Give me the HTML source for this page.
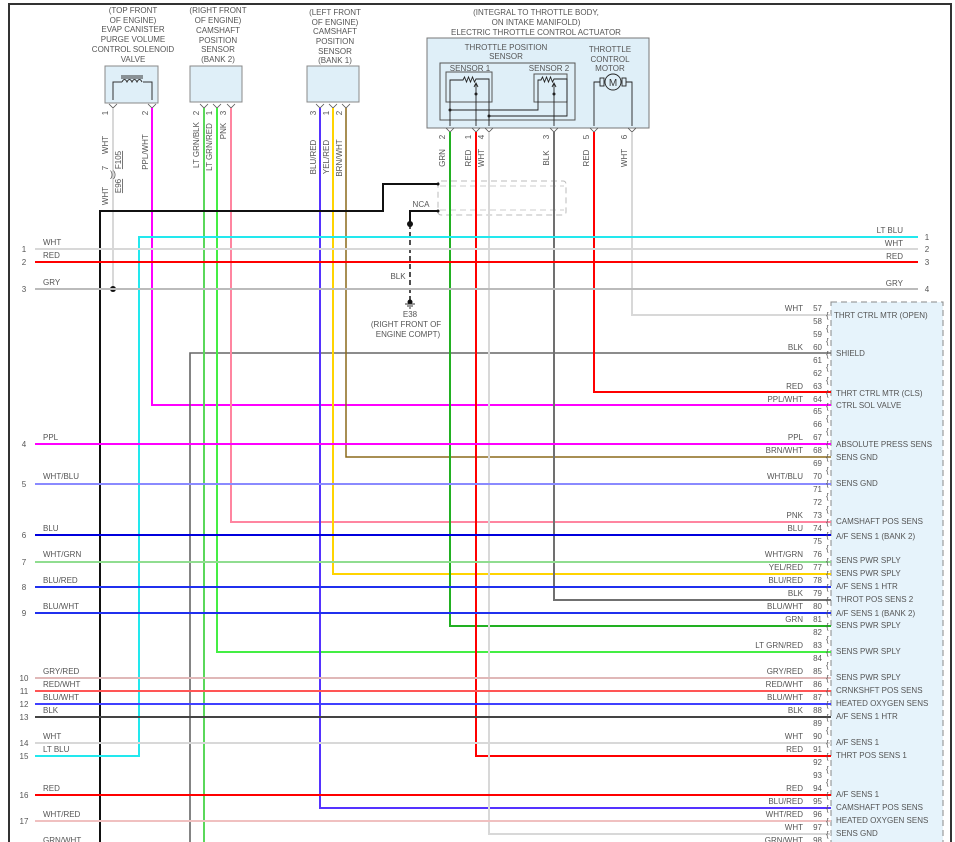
<!DOCTYPE html>
<html><head><meta charset="utf-8"><style>
html,body{margin:0;padding:0;background:#fff}
svg{display:block}
text{font-family:"Liberation Sans",sans-serif;font-size:8px;fill:#555}
.c{text-anchor:middle}.r{text-anchor:end}
</style></head><body>
<svg width="955" height="842" viewBox="0 0 955 842" xmlns="http://www.w3.org/2000/svg">
<rect x="9" y="4" width="942" height="850" fill="none" stroke="#333" stroke-width="2"/>

<!-- module box -->
<rect x="831" y="302" width="112" height="560" fill="#e6f3fb" stroke="#888" stroke-dasharray="6,4"/>

<!-- header texts -->
<g class="c">
<text x="133" y="13" class="c">(TOP FRONT</text><text x="133" y="23" class="c">OF ENGINE)</text><text x="133" y="32" class="c">EVAP CANISTER</text><text x="133" y="42" class="c">PURGE VOLUME</text><text x="133" y="52" class="c">CONTROL SOLENOID</text><text x="133" y="62" class="c">VALVE</text>
<text x="218" y="13" class="c">(RIGHT FRONT</text><text x="218" y="23" class="c">OF ENGINE)</text><text x="218" y="33" class="c">CAMSHAFT</text><text x="218" y="43" class="c">POSITION</text><text x="218" y="52" class="c">SENSOR</text><text x="218" y="62" class="c">(BANK 2)</text>
<text x="335" y="15" class="c">(LEFT FRONT</text><text x="335" y="25" class="c">OF ENGINE)</text><text x="335" y="34" class="c">CAMSHAFT</text><text x="335" y="44" class="c">POSITION</text><text x="335" y="54" class="c">SENSOR</text><text x="335" y="63" class="c">(BANK 1)</text>
<text x="536" y="15" class="c">(INTEGRAL TO THROTTLE BODY,</text><text x="536" y="25" class="c">ON INTAKE MANIFOLD)</text><text x="536" y="35" class="c">ELECTRIC THROTTLE CONTROL ACTUATOR</text>
</g>

<!-- connectors -->
<rect x="105" y="66" width="53" height="37" fill="#dfeff8" stroke="#888"/>
<path d="M113,100 V82 H122 M152,100 V82 H143" fill="none" stroke="#333"/>
<path d="M122,82 q2.5,-5 5,0 q2.5,-5 5,0 q2.5,-5 5,0 q2.5,-5 5,0" fill="none" stroke="#333"/>
<path d="M121,76 H143 M121,78 H143" stroke="#333"/>
<rect x="190" y="66" width="52" height="36" fill="#dfeff8" stroke="#888"/>
<rect x="307" y="66" width="52" height="36" fill="#dfeff8" stroke="#888"/>

<rect x="427" y="38" width="222" height="90" fill="#dfeff8" stroke="#777"/>
<rect x="440" y="63" width="135" height="57" fill="none" stroke="#555"/>
<rect x="446" y="72" width="46" height="30" fill="none" stroke="#555"/>
<rect x="534" y="74" width="33" height="28" fill="none" stroke="#555"/>
<text x="506" y="50" class="c">THROTTLE POSITION</text><text x="506" y="59" class="c">SENSOR</text>
<text x="470" y="71" class="c">SENSOR 1</text><text x="549" y="71" class="c">SENSOR 2</text>
<text x="610" y="52" class="c">THROTTLE</text><text x="610" y="62" class="c">CONTROL</text><text x="610" y="71" class="c">MOTOR</text>
<g fill="none" stroke="#222" stroke-width="0.9">
<path d="M450,126 V80 H463 l1.5,-3 2,5 2,-5 2,5 2,-5 2,5 1.5,-3 H489 V126"/>
<path d="M476,126 V84 M474,87 l2,-4 2,4"/>
<path d="M450,110 H538 V80 H541 l1.5,-3 2,5 2,-5 2,5 2,-5 2,5 1.5,-3 H567 V116 H489"/>
<path d="M554,126 V84 M552,87 l2,-4 2,4"/>
<path d="M594,126 V82 H600 M626,82 H632 V126"/>
<rect x="600" y="78" width="4" height="8"/><rect x="622" y="78" width="4" height="8"/>
<circle cx="613" cy="82" r="8"/>
</g>
<text x="613" y="86" class="c" style="font-size:10px;fill:#333">M</text>
<g fill="#222"><circle cx="476" cy="94" r="1.5"/><circle cx="554" cy="94" r="1.5"/><circle cx="450" cy="110" r="1.5"/><circle cx="489" cy="116" r="1.5"/></g>

<!-- pin chevrons -->
<g fill="none" stroke="#555" stroke-width="0.8">
<path d="M109,104 l4,4 4,-4 M148,104 l4,4 4,-4 M200,104 l4,4 4,-4 M213,104 l4,4 4,-4 M227,104 l4,4 4,-4 M316,104 l4,4 4,-4 M329,104 l4,4 4,-4 M342,104 l4,4 4,-4"/>
<path d="M446,128 l4,4 4,-4 M472,128 l4,4 4,-4 M485,128 l4,4 4,-4 M550,128 l4,4 4,-4 M590,128 l4,4 4,-4 M628,128 l4,4 4,-4"/>
</g>

<!-- dashed NCA box -->
<rect x="438" y="181" width="128" height="34" rx="3" fill="none" stroke="#bbb" stroke-dasharray="6,4"/>
<path d="M440,186 H564 M440,210 H564" stroke="#ccc" stroke-dasharray="6,4"/>

<!-- verticals -->
<g fill="none" stroke-width="2">
<path d="M113,108 V289" stroke="#d8d8d8"/>
<path d="M152,108 V405 H831" stroke="#ff00ff"/>
<path d="M190,842 V353 H831" stroke="#666" stroke-width="1.6"/>
<path d="M204,108 V842" stroke="#5ad85a"/>
<path d="M217,108 V652 H831" stroke="#44ee44"/>
<path d="M231,108 V522 H831" stroke="#ff85a0"/>
<path d="M320,108 V808 H831" stroke="#5533ff"/>
<path d="M333,108 V574 H831" stroke="#ffd400"/>
<path d="M346,108 V457 H831" stroke="#8b6a1a" stroke-width="1.5"/>
<path d="M450,132 V626 H831" stroke="#22b022"/>
<path d="M476,132 V756 H831" stroke="#ff0000"/>
<path d="M489,132 V834 H831" stroke="#d8d8d8"/>
<path d="M554,132 V600 H831" stroke="#707070"/>
<path d="M594,132 V392 H831" stroke="#ff0000"/>
<path d="M632,132 V315 H831" stroke="#d8d8d8"/>
<path d="M100,842 V211 H383 V184 H438" stroke="#111"/>
<path d="M410,224 V211 H438" stroke="#111"/>
<path d="M410,224 V300" stroke="#222" stroke-dasharray="5,3" stroke-width="1.6"/>
<path d="M35,756 H139 V237 H918" stroke="#22e8ee"/>
</g>
<g fill="#111"><circle cx="113" cy="289" r="3"/><circle cx="410" cy="224" r="3"/><circle cx="438" cy="184" r="1.5"/><circle cx="438" cy="211" r="1.5"/><circle cx="410" cy="302" r="2.5"/></g>
<path d="M405,304 H415 M407,306 H413 M409,308 H411" stroke="#333"/>
<text x="421" y="207" class="c">NCA</text>
<text x="398" y="279" class="c">BLK</text>
<text x="410" y="317" class="c">E38</text>
<text x="406" y="327" class="c">(RIGHT FRONT OF</text>
<text x="408" y="337" class="c">ENGINE COMPT)</text>

<!-- horizontal wires -->
<g fill="none" stroke-width="2">
<path d="M35,249 H918" stroke="#d8d8d8"/>
<path d="M35,262 H918" stroke="#ff0000"/>
<path d="M35,289 H918" stroke="#bbbbbb"/>
<path d="M35,444 H831" stroke="#ff00ff"/>
<path d="M35,484 H831" stroke="#8a8aff"/>
<path d="M35,535 H831" stroke="#0000dd"/>
<path d="M35,562 H831" stroke="#90dd90"/>
<path d="M35,587 H831" stroke="#2030ee"/>
<path d="M35,613 H831" stroke="#2030ee"/>
<path d="M35,678 H831" stroke="#e0b8b8"/>
<path d="M35,691 H831" stroke="#ff5555"/>
<path d="M35,704 H831" stroke="#4040ff"/>
<path d="M35,717 H831" stroke="#444"/>
<path d="M35,743 H831" stroke="#d8d8d8"/>
<path d="M35,795 H831" stroke="#ff0000"/>
<path d="M35,821 H831" stroke="#f0c0c0"/>
</g>

<!-- rotated labels -->
<g>
<text transform="translate(108,113) rotate(-90)" class="c">1</text>
<text transform="translate(148,113) rotate(-90)" class="c">2</text>
<text transform="translate(108,145) rotate(-90)" class="c">WHT</text>
<text transform="translate(108,168) rotate(-90)" class="c">7</text>
<text transform="translate(108,196) rotate(-90)" class="c">WHT</text>
<text transform="translate(121,160) rotate(-90)" class="c" style="text-decoration:underline">F105</text>
<text transform="translate(121,186) rotate(-90)" class="c" style="text-decoration:underline">E96</text>
<text x="110" y="177" style="font-size:9px">)</text><text x="113" y="177" style="font-size:9px">)</text>
<text transform="translate(148,152) rotate(-90)" class="c">PPL/WHT</text>
<text transform="translate(199,113) rotate(-90)" class="c">2</text>
<text transform="translate(212,113) rotate(-90)" class="c">1</text>
<text transform="translate(226,113) rotate(-90)" class="c">3</text>
<text transform="translate(199,145) rotate(-90)" class="c">LT GRN/BLK</text>
<text transform="translate(212,147) rotate(-90)" class="c">LT GRN/RED</text>
<text transform="translate(226,131) rotate(-90)" class="c">PNK</text>
<text transform="translate(316,113) rotate(-90)" class="c">3</text>
<text transform="translate(329,113) rotate(-90)" class="c">1</text>
<text transform="translate(342,113) rotate(-90)" class="c">2</text>
<text transform="translate(316,157) rotate(-90)" class="c">BLU/RED</text>
<text transform="translate(329,157) rotate(-90)" class="c">YEL/RED</text>
<text transform="translate(342,158) rotate(-90)" class="c">BRN/WHT</text>
<text transform="translate(445,137) rotate(-90)" class="c">2</text>
<text transform="translate(471,137) rotate(-90)" class="c">1</text>
<text transform="translate(484,137) rotate(-90)" class="c">4</text>
<text transform="translate(549,137) rotate(-90)" class="c">3</text>
<text transform="translate(589,137) rotate(-90)" class="c">5</text>
<text transform="translate(627,137) rotate(-90)" class="c">6</text>
<text transform="translate(445,158) rotate(-90)" class="c">GRN</text>
<text transform="translate(471,158) rotate(-90)" class="c">RED</text>
<text transform="translate(484,158) rotate(-90)" class="c">WHT</text>
<text transform="translate(549,158) rotate(-90)" class="c">BLK</text>
<text transform="translate(589,158) rotate(-90)" class="c">RED</text>
<text transform="translate(627,158) rotate(-90)" class="c">WHT</text>
</g>

<!-- left pin labels -->
<g>
<text x="24" y="252" class="c">1</text><text x="43" y="245">WHT</text>
<text x="24" y="265" class="c">2</text><text x="43" y="258">RED</text>
<text x="24" y="292" class="c">3</text><text x="43" y="285">GRY</text>
<text x="24" y="447" class="c">4</text><text x="43" y="440">PPL</text>
<text x="24" y="487" class="c">5</text><text x="43" y="479">WHT/BLU</text>
<text x="24" y="538" class="c">6</text><text x="43" y="531">BLU</text>
<text x="24" y="565" class="c">7</text><text x="43" y="557">WHT/GRN</text>
<text x="24" y="590" class="c">8</text><text x="43" y="583">BLU/RED</text>
<text x="24" y="616" class="c">9</text><text x="43" y="609">BLU/WHT</text>
<text x="24" y="681" class="c">10</text><text x="43" y="674">GRY/RED</text>
<text x="24" y="694" class="c">11</text><text x="43" y="687">RED/WHT</text>
<text x="24" y="707" class="c">12</text><text x="43" y="700">BLU/WHT</text>
<text x="24" y="720" class="c">13</text><text x="43" y="713">BLK</text>
<text x="24" y="746" class="c">14</text><text x="43" y="739">WHT</text>
<text x="24" y="759" class="c">15</text><text x="43" y="752">LT BLU</text>
<text x="24" y="798" class="c">16</text><text x="43" y="791">RED</text>
<text x="24" y="824" class="c">17</text><text x="43" y="817">WHT/RED</text>
<text x="43" y="843">GRN/WHT</text>
</g>

<!-- right side pins 1-4 -->
<g>
<text x="903" y="233" class="r">LT BLU</text><text x="927" y="240" class="c">1</text>
<text x="903" y="246" class="r">WHT</text><text x="927" y="252" class="c">2</text>
<text x="903" y="259" class="r">RED</text><text x="927" y="265" class="c">3</text>
<text x="903" y="286" class="r">GRY</text><text x="927" y="292" class="c">4</text>
</g>

<!-- module pins -->
<g>
<text x="803" y="311" class="r">WHT</text>
<text x="803" y="350" class="r">BLK</text>
<text x="803" y="389" class="r">RED</text>
<text x="803" y="402" class="r">PPL/WHT</text>
<text x="803" y="440" class="r">PPL</text>
<text x="803" y="453" class="r">BRN/WHT</text>
<text x="803" y="479" class="r">WHT/BLU</text>
<text x="803" y="518" class="r">PNK</text>
<text x="803" y="531" class="r">BLU</text>
<text x="803" y="557" class="r">WHT/GRN</text>
<text x="803" y="570" class="r">YEL/RED</text>
<text x="803" y="583" class="r">BLU/RED</text>
<text x="803" y="596" class="r">BLK</text>
<text x="803" y="609" class="r">BLU/WHT</text>
<text x="803" y="622" class="r">GRN</text>
<text x="803" y="648" class="r">LT GRN/RED</text>
<text x="803" y="674" class="r">GRY/RED</text>
<text x="803" y="687" class="r">RED/WHT</text>
<text x="803" y="700" class="r">BLU/WHT</text>
<text x="803" y="713" class="r">BLK</text>
<text x="803" y="739" class="r">WHT</text>
<text x="803" y="752" class="r">RED</text>
<text x="803" y="791" class="r">RED</text>
<text x="803" y="804" class="r">BLU/RED</text>
<text x="803" y="817" class="r">WHT/RED</text>
<text x="803" y="830" class="r">WHT</text>
<text x="803" y="843" class="r">GRN/WHT</text>
</g>
<g style="font-size:7.5px">
<text x="822" y="311" class="r">57</text><text x="822" y="324" class="r">58</text><text x="822" y="337" class="r">59</text><text x="822" y="350" class="r">60</text><text x="822" y="363" class="r">61</text><text x="822" y="376" class="r">62</text><text x="822" y="389" class="r">63</text><text x="822" y="402" class="r">64</text><text x="822" y="414" class="r">65</text><text x="822" y="427" class="r">66</text><text x="822" y="440" class="r">67</text><text x="822" y="453" class="r">68</text><text x="822" y="466" class="r">69</text><text x="822" y="479" class="r">70</text><text x="822" y="492" class="r">71</text><text x="822" y="505" class="r">72</text><text x="822" y="518" class="r">73</text><text x="822" y="531" class="r">74</text><text x="822" y="544" class="r">75</text><text x="822" y="557" class="r">76</text><text x="822" y="570" class="r">77</text><text x="822" y="583" class="r">78</text><text x="822" y="596" class="r">79</text><text x="822" y="609" class="r">80</text><text x="822" y="622" class="r">81</text><text x="822" y="635" class="r">82</text><text x="822" y="648" class="r">83</text><text x="822" y="661" class="r">84</text><text x="822" y="674" class="r">85</text><text x="822" y="687" class="r">86</text><text x="822" y="700" class="r">87</text><text x="822" y="713" class="r">88</text><text x="822" y="726" class="r">89</text><text x="822" y="739" class="r">90</text><text x="822" y="752" class="r">91</text><text x="822" y="765" class="r">92</text><text x="822" y="778" class="r">93</text><text x="822" y="791" class="r">94</text><text x="822" y="804" class="r">95</text><text x="822" y="817" class="r">96</text><text x="822" y="830" class="r">97</text><text x="822" y="843" class="r">98</text>
</g>
<!-- brackets -->
<g style="font-size:9px;fill:#444">
<text x="826" y="318">{</text><text x="826" y="331">{</text><text x="826" y="344">{</text><text x="826" y="357">{</text><text x="826" y="370">{</text><text x="826" y="383">{</text><text x="826" y="396">{</text><text x="826" y="409">{</text><text x="826" y="421">{</text><text x="826" y="434">{</text><text x="826" y="447">{</text><text x="826" y="460">{</text><text x="826" y="473">{</text><text x="826" y="486">{</text><text x="826" y="499">{</text><text x="826" y="512">{</text><text x="826" y="525">{</text><text x="826" y="538">{</text><text x="826" y="551">{</text><text x="826" y="564">{</text><text x="826" y="577">{</text><text x="826" y="590">{</text><text x="826" y="603">{</text><text x="826" y="616">{</text><text x="826" y="629">{</text><text x="826" y="642">{</text><text x="826" y="655">{</text><text x="826" y="668">{</text><text x="826" y="681">{</text><text x="826" y="694">{</text><text x="826" y="707">{</text><text x="826" y="720">{</text><text x="826" y="733">{</text><text x="826" y="746">{</text><text x="826" y="759">{</text><text x="826" y="772">{</text><text x="826" y="785">{</text><text x="826" y="798">{</text><text x="826" y="811">{</text><text x="826" y="824">{</text><text x="826" y="837">{</text>
</g>
<!-- module labels -->
<g>
<text x="834" y="318">THRT CTRL MTR (OPEN)</text>
<text x="836" y="356">SHIELD</text>
<text x="836" y="396">THRT CTRL MTR (CLS)</text>
<text x="836" y="408">CTRL SOL VALVE</text>
<text x="836" y="447">ABSOLUTE PRESS SENS</text>
<text x="836" y="460">SENS GND</text>
<text x="836" y="486">SENS GND</text>
<text x="836" y="524">CAMSHAFT POS SENS</text>
<text x="836" y="539">A/F SENS 1 (BANK 2)</text>
<text x="836" y="563">SENS PWR SPLY</text>
<text x="836" y="576">SENS PWR SPLY</text>
<text x="836" y="589">A/F SENS 1 HTR</text>
<text x="836" y="602">THROT POS SENS 2</text>
<text x="836" y="616">A/F SENS 1 (BANK 2)</text>
<text x="836" y="628">SENS PWR SPLY</text>
<text x="836" y="654">SENS PWR SPLY</text>
<text x="836" y="680">SENS PWR SPLY</text>
<text x="836" y="693">CRNKSHFT POS SENS</text>
<text x="836" y="706">HEATED OXYGEN SENS</text>
<text x="836" y="719">A/F SENS 1 HTR</text>
<text x="836" y="745">A/F SENS 1</text>
<text x="836" y="758">THRT POS SENS 1</text>
<text x="836" y="797">A/F SENS 1</text>
<text x="836" y="810">CAMSHAFT POS SENS</text>
<text x="836" y="823">HEATED OXYGEN SENS</text>
<text x="836" y="836">SENS GND</text>
</g>
</svg>
</body></html>
